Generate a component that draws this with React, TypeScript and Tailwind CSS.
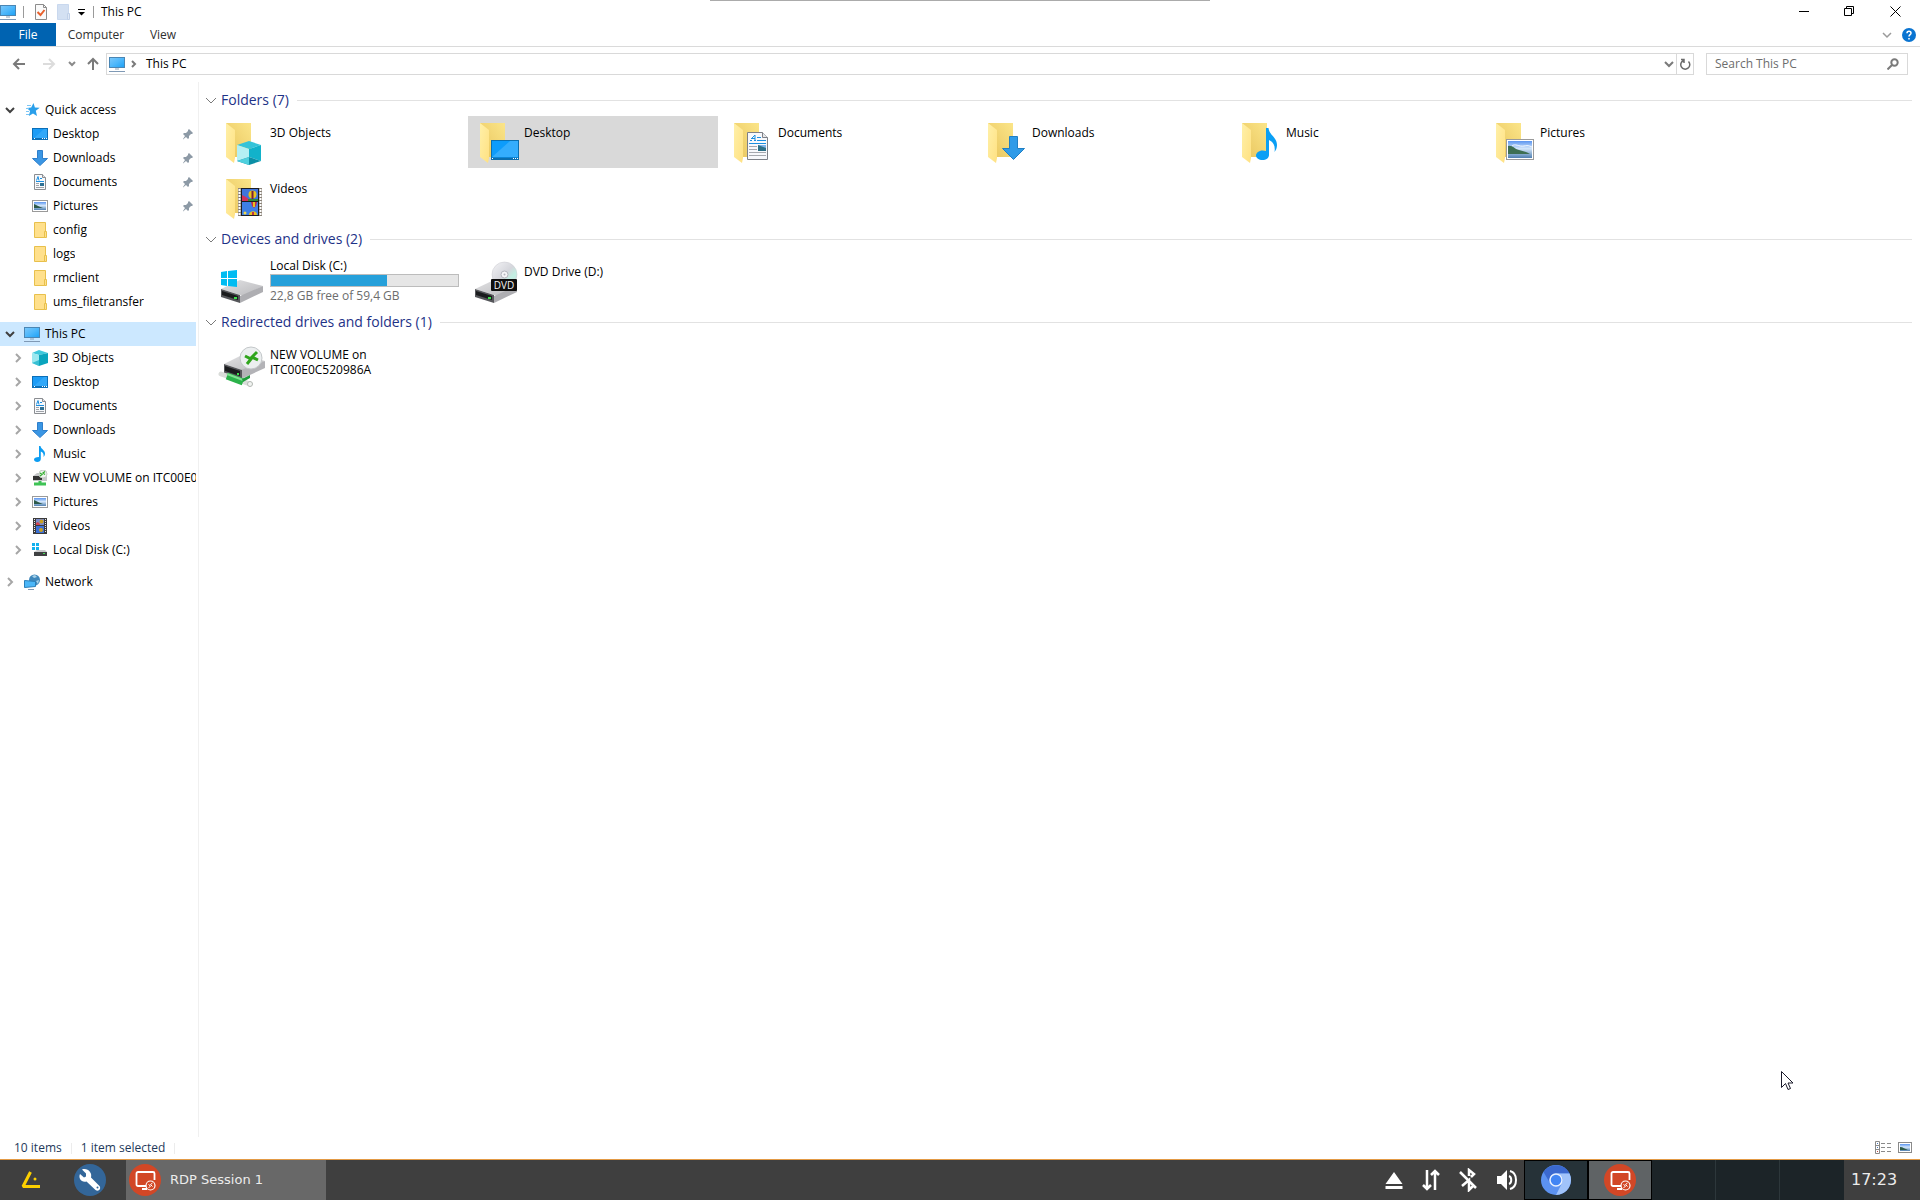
import React from 'react';
import { clsx } from 'clsx';

type IconName =
  | 'desktop'
  | 'downloads'
  | 'documents'
  | 'pictures'
  | 'folder'
  | 'objects'
  | 'music'
  | 'volume'
  | 'videos'
  | 'disk'
  | 'pc'
  | 'network'
  | 'star';

interface TreeItem {
  label: string;
  icon: IconName;
  pinned?: boolean;
}

interface FolderItem {
  label: string;
  icon: IconName;
  selected?: boolean;
}

const quickAccess: TreeItem[] = [
  { label: 'Desktop', icon: 'desktop', pinned: true },
  { label: 'Downloads', icon: 'downloads', pinned: true },
  { label: 'Documents', icon: 'documents', pinned: true },
  { label: 'Pictures', icon: 'pictures', pinned: true },
  { label: 'config', icon: 'folder' },
  { label: 'logs', icon: 'folder' },
  { label: 'rmclient', icon: 'folder' },
  { label: 'ums_filetransfer', icon: 'folder' },
];

const thisPc: TreeItem[] = [
  { label: '3D Objects', icon: 'objects' },
  { label: 'Desktop', icon: 'desktop' },
  { label: 'Documents', icon: 'documents' },
  { label: 'Downloads', icon: 'downloads' },
  { label: 'Music', icon: 'music' },
  { label: 'NEW VOLUME on ITC00E0C520986A', icon: 'volume' },
  { label: 'Pictures', icon: 'pictures' },
  { label: 'Videos', icon: 'videos' },
  { label: 'Local Disk (C:)', icon: 'disk' },
];

const folders: FolderItem[] = [
  { label: '3D Objects', icon: 'objects' },
  { label: 'Desktop', icon: 'desktop', selected: true },
  { label: 'Documents', icon: 'documents' },
  { label: 'Downloads', icon: 'downloads' },
  { label: 'Music', icon: 'music' },
  { label: 'Pictures', icon: 'pictures' },
  { label: 'Videos', icon: 'videos' },
];

/* Gradients shared by all icons */
const Gradients = () => (
  <svg className="absolute h-0 w-0" aria-hidden="true">
    <defs>
      <linearGradient id="screen" x1="0" y1="0" x2="1" y2="1">
        <stop offset="0" stopColor="#7cc8fb" />
        <stop offset="0.5" stopColor="#4fb8fb" />
        <stop offset="1" stopColor="#1ba0f5" />
      </linearGradient>
      <linearGradient id="back" x1="1" y1="0" x2="0" y2="1">
        <stop offset="0" stopColor="#fbe589" />
        <stop offset="1" stopColor="#e8c45c" />
      </linearGradient>
      <linearGradient id="flap" x1="0" y1="0" x2="1" y2="1">
        <stop offset="0" stopColor="#fff0a8" />
        <stop offset="1" stopColor="#ffe182" />
      </linearGradient>
      <linearGradient id="sky" x1="0" y1="0" x2="0" y2="1">
        <stop offset="0" stopColor="#5b95f0" />
        <stop offset="0.45" stopColor="#d3e6fa" />
        <stop offset="1" stopColor="#4f7fb0" />
      </linearGradient>
      <linearGradient id="metal" x1="0" y1="0" x2="1" y2="1">
        <stop offset="0" stopColor="#e2e2e4" />
        <stop offset="1" stopColor="#b9b9bc" />
      </linearGradient>
      <linearGradient id="disc" x1="0" y1="0" x2="1" y2="1">
        <stop offset="0" stopColor="#f4f4f6" />
        <stop offset="0.5" stopColor="#d5d6dc" />
        <stop offset="0.7" stopColor="#c2efe2" />
        <stop offset="1" stopColor="#d5d6dc" />
      </linearGradient>
    </defs>
  </svg>
);

const smallIcons: Record<IconName, React.ReactNode> = {
  desktop: (
    <>
      <rect x="0.5" y="2.5" width="15" height="11" fill="#1c9cf6" stroke="#0b6fb8" />
      <path d="M1 13L12 3h3v10z" fill="#3fb0fb" opacity="0.6" />
      <path d="M1 12.5h14" stroke="#0b6fb8" />
      <path d="M2 12.5h1M10 12.5h1M12 12.5h1M14 12.5h1" stroke="#fff" />
    </>
  ),
  downloads: <path d="M5.5 0.5h5v8h5L8 15.5 0.5 8.500h5z" fill="#3a96e4" stroke="#2f7fcb" />,
  documents: (
    <>
      <path d="M2.500 0.500h8l3 3v12h-11z" fill="#f8f9fb" stroke="#8a8d91" />
      <path d="M10.500 0.500v3h3" fill="#e3e5e8" stroke="#8a8d91" />
      <path d="M4.500 6.500L6 2.500l1 4M8 4.500h2M4 7.500h8" stroke="#1c8fe0" fill="none" />
      <path d="M4 9.500h3M4 11.500h3M4 13.500h8" stroke="#9ea2a8" />
      <rect x="8" y="9" width="4" height="3" fill="#2f7093" />
    </>
  ),
  pictures: (
    <>
      <rect x="0.500" y="2.500" width="15" height="11" fill="#fff" stroke="#9a9a9a" />
      <rect x="2" y="4" width="12" height="8" fill="url(#sky)" />
      <path d="M2 6c3 1 5 3 9 4H2z" fill="#2d5a4a" />
    </>
  ),
  folder: (
    <>
      <path d="M2.500 0.500h11v15h-11z" fill="#ffe08c" stroke="#e8c04c" />
      <path d="M12.500 9.500h2v6h-2z" fill="#ffe08c" stroke="#e8c04c" />
    </>
  ),
  objects: (
    <>
      <path d="M0 3L7 0l9 3-9 2z" fill="#3fc8dc" />
      <path d="M0 3l7 2v11l-7-3z" fill="#9be8f0" />
      <path d="M7 5l9-2v10l-9 3z" fill="#0aa4bd" />
      <path d="M0 13l7-3v6z" fill="#38bfd3" />
    </>
  ),
  music: <path d="M7 0h1.500c.3 3 4.500 4 4.500 7.500 0 1.500-.6 2.500-1.500 3.500.6-3-.5-4.500-2.700-5.400V13c0 1.800-1.600 3-3.500 3S2 15 2 13.500 3.800 11 7 11z" fill="#0c9df2" />,
  volume: (
    <>
      <path d="M1 6l4-3h8l2 3v5H1z" fill="#c6c7c9" />
      <rect x="1" y="6" width="9" height="4" fill="#333" />
      <circle cx="11" cy="4" r="4" fill="#eef2ee" stroke="#c4cbc4" />
      <path d="M8 3l2 1.500L8 6M13 1.500L11 3l2 1.500" stroke="#2fae2c" fill="none" strokeWidth="1.300" />
      <path d="M2 14h12M8 11v3" stroke="#3ec255" strokeWidth="3" />
    </>
  ),
  videos: (
    <>
      <rect x="1" y="0" width="14" height="16" fill="#3b3b3b" />
      <path d="M2.500 1v14M13.500 1v14" stroke="#e8e8e8" strokeDasharray="1 1" />
      <rect x="4" y="1" width="8" height="6" fill="#7d8cc8" />
      <rect x="4" y="8" width="8" height="7" fill="#3a6fd6" />
      <path d="M4 5l2-1 2 2v1H4z" fill="#d24452" />
      <circle cx="9.500" cy="3.500" r="2" fill="#c9a021" />
      <circle cx="9" cy="12" r="2" fill="#c9a021" />
    </>
  ),
  disk: (
    <>
      <path d="M0 1h3v3H0zM4 1h3v3H4zM0 5h3v3H0zM4 5h3v3H4z" fill="#12b1ee" />
      <path d="M2 10l3-2h8l2 2z" fill="#c9cacc" />
      <rect x="2" y="10" width="13" height="4" fill="#3f4042" />
      <rect x="11" y="11" width="2" height="1" fill="#48e05a" />
    </>
  ),
  pc: (
    <>
      <rect x="0.500" y="1.500" width="15" height="10" fill="url(#screen)" stroke="#4a86b4" />
      <path d="M6 13h4" stroke="#8a9fb4" />
      <path d="M0 15.500h16" stroke="#7f99b5" />
    </>
  ),
  network: (
    <>
      <circle cx="10.500" cy="6" r="5.500" fill="#3f88bc" />
      <path d="M8 2l3-1 2 2-3 1zM12 7l3-1-1 4z" fill="#a9d3ea" />
      <path d="M0.500 6.500l11 1v5l-11 1z" fill="#4ab6f8" stroke="#2a7fb8" />
      <path d="M4 15.500h6" stroke="#7f99b5" />
    </>
  ),
  star: (
    <>
      <path d="M9.500 1l1.400 4.500 4.800.2-3.900 3 1.200 5.300-4-2.600L4.800 14l1.300-4.900-3.300-3 4.400-.5z" fill="#2a9fea" />
      <path d="M3 3.500h4M2 6.500h3M2 9.500h3M2 12.500h3" stroke="#7cc6f5" />
    </>
  ),
};

const SmallIcon = ({ name }: { name: IconName }) => (
  <svg className="h-4 w-4 shrink-0" viewBox="0 0 16 16" aria-hidden="true">
    {smallIcons[name]}
  </svg>
);

/* Overlays are drawn in the same 48px box as the folder behind them */
const overlays: Partial<Record<IconName, React.ReactNode>> = {
  objects: (
    <>
      <path d="M19 27l12-4 12 4-12 4z" fill="#35c3d8" />
      <path d="M19 27l12 4v8l-12 4z" fill="#b4f0f4" />
      <path d="M43 27l-12 4v8l12 4z" fill="#12b2ca" />
      <path d="M19 43l12-4 12 4-12 4z" fill="#0b8fa6" />
      <path d="M19 43l12-4v8z" fill="#4fd0de" />
    </>
  ),
  desktop: (
    <>
      <rect x="19.500" y="22.500" width="27" height="19" fill="#0d9cfb" stroke="#0b6fb0" />
      <path d="M20 39L38 23h8v16z" fill="#34adfd" />
      <path d="M20 40.500h26" stroke="#0b6fb0" strokeWidth="2" />
      <path d="M20 40.500h1M41 40.500h1M43 40.500h1M45 40.500h1" stroke="#fff" />
    </>
  ),
  documents: (
    <>
      <path d="M21.500 14.500h15l5 5v22h-20z" fill="#f7f8fb" stroke="#7d8087" />
      <path d="M36.500 14.500v5h5" fill="#e6e7ea" stroke="#7d8087" />
      <path d="M24 22.500h2M28 22.500h2M25 21l4-4 0 5M26 20.500h3M31 19.500h4M31 22.500h9M23 25.500h17" stroke="#1c8fe0" fill="none" />
      <path d="M23 28.500h8M23 31.500h8M23 34.500h17M23 37.500h17" stroke="#a5a8ae" />
      <rect x="32" y="27" width="8" height="6" fill="#2d6f86" />
      <path d="M32 27h8v3z" fill="#7fb4e8" />
    </>
  ),
  downloads: <path d="M29.500 18.500h8v12h7L33.500 41.500 22.500 30.500h7z" fill="#2f9be8" stroke="#1f7fc4" />,
  music: <path d="M32 10h2.500c.5 7 8.500 9 8.500 17 0 3-1 5-2.500 7 1-6-1-10-5.500-12v15c0 3-3 5-6.500 5S22 40 22 37.500s3-5 6.500-5c1.500 0 2.500.2 3.500.5z" fill="#0a9ff5" />,
  pictures: (
    <>
      <rect x="18.500" y="21.500" width="27" height="20" fill="#fff" stroke="#9a9a9a" />
      <rect x="20" y="23" width="24" height="17" fill="url(#sky)" />
      <path d="M20 28c5-1 6 3 11 4 4 1 8 2 11 4H20z" fill="#3e6f52" />
      <path d="M24 28c3-3 7 1 12 0s5 0 8 1" stroke="#f2f8fd" fill="none" />
    </>
  ),
  videos: (
    <>
      <rect x="20" y="14" width="24" height="28" fill="#8b8378" />
      <path d="M21.500 15v26M42.500 15v26" stroke="#fff" strokeWidth="2" strokeDasharray="2 1" />
      <rect x="23" y="14" width="18" height="28" fill="#1d1d20" />
      <rect x="24" y="15" width="16" height="12" fill="#3f74dc" />
      <rect x="24" y="28" width="16" height="13" fill="#3e7fe6" />
      <path d="M24 21l4 2 4 3v1h-8z" fill="#d2325a" />
      <path d="M30 25h10v2H30z" fill="#2f8a3c" />
      <circle cx="34.500" cy="20.500" r="4" fill="#e8c21d" />
      <path d="M34.500 17v8" stroke="#7a1f3a" strokeWidth="2" />
      <path d="M33 28h6l-1 4-2 2-2-2z" fill="#c0304a" />
      <path d="M36 28v5" stroke="#e8c21d" strokeWidth="2" />
      <path d="M31 41c0-5 8-5 8 0z" fill="#e8c21d" />
      <path d="M35 38v3" stroke="#c0304a" strokeWidth="2" />
      <circle cx="27" cy="39" r="1.500" fill="#f2d94a" />
    </>
  ),
};

const FolderIcon = ({ name }: { name: IconName }) => (
  <svg className="h-12 w-12 shrink-0" viewBox="0 0 48 48" aria-hidden="true">
    <path d="M8 5h25v34H8z" fill="url(#back)" />
    <path d="M8 5l9 7v28l-1 5-8-6z" fill="url(#flap)" />
    {overlays[name]}
  </svg>
);

const DriveBody = () => (
  <>
    <path d="M3 32l19-9 23 6-19 10z" fill="url(#metal)" />
    <path d="M22 39l23-10v6L22 46v-7z" fill="#aeaeb2" />
    <path d="M3 32l19 6v8L3 40z" fill="#55565a" />
    <path d="M4 34l16 5v4L4 38z" fill="#1a1b1d" />
    <rect x="16" y="40" width="3" height="2" fill="#3de04c" />
  </>
);

const LocalDiskIcon = () => (
  <svg className="h-12 w-12 shrink-0" viewBox="0 0 48 48" aria-hidden="true">
    <DriveBody />
    <path d="M3 15l6-1v7H3zM10 14l9-1v8h-9zM3 22h6v7l-6-1zM10 22h9v8l-9-1z" fill="#00bcf2" />
  </svg>
);

const DvdIcon = () => (
  <svg className="h-12 w-12 shrink-0" viewBox="0 0 48 48" aria-hidden="true">
    <DriveBody />
    <circle cx="32.500" cy="17.500" r="12.500" fill="url(#disc)" stroke="#c8c9cf" strokeWidth="0.500" />
    <circle cx="32.500" cy="17.500" r="3.500" fill="#f6f6f8" stroke="#b4b6be" />
    <circle cx="32.500" cy="17.500" r="1" fill="#b4b6be" />
    <rect x="19" y="22" width="26" height="12" rx="1" fill="#0e0e0e" />
    <text x="32" y="32" textAnchor="middle" fontSize="10" fontFamily="Open Sans, sans-serif" fill="#f2f2f2">
      DVD
    </text>
  </svg>
);

const RedirectedIcon = () => (
  <svg className="h-12 w-12 shrink-0" viewBox="0 0 48 48" aria-hidden="true">
    <path d="M6 24l18-9 23 6-20 10z" fill="url(#metal)" />
    <path d="M23 30l24-9v7L23 39z" fill="#b3b3b7" />
    <path d="M6 24l18 6v9L6 33z" fill="#55565a" />
    <path d="M7 26l15 5v5L7 31z" fill="#1a1b1d" />
    <rect x="19" y="33" width="2" height="2" fill="#3de04c" />
    <path d="M3 34l29 10" stroke="#d9dcd9" strokeWidth="5" strokeLinecap="round" />
    <circle cx="32" cy="44" r="2.500" fill="#f2f4f2" stroke="#b4b8b4" />
    <path d="M9 36l16 6" stroke="#2bb24a" strokeWidth="7" />
    <path d="M9 34l16 6" stroke="#7ee08f" strokeWidth="2" />
    <path d="M24 39l8-4v3l-7 4z" fill="#1f9c3c" />
    <circle cx="33" cy="18" r="11" fill="#eceff0" stroke="#c3c7c9" />
    <path d="M27 16l6 3-4 5M39 12l-5 5 6 3" stroke="#2fa51c" strokeWidth="3" fill="none" />
  </svg>
);

const Chevron = ({ open, dark }: { open?: boolean; dark?: boolean }) => (
  <svg
    className={clsx('h-[10px] w-[10px] shrink-0', dark ? 'text-[#404040]' : 'text-[#a6a6a6]')}
    viewBox="0 0 10 10"
    fill="none"
    stroke="currentColor"
    strokeWidth="2"
    aria-hidden="true"
  >
    <path d={open ? 'M1 3l4 4 4-4' : 'M3 1l4 4-4 4'} />
  </svg>
);

const Pin = () => (
  <svg className="mr-[2px] ml-auto h-3 w-3 shrink-0" viewBox="0 0 12 12" aria-hidden="true">
    <path d="M7 1l4 4-1 1-1 0-2 2 0 2-1 1-2-2L1 11.500 1 11 3 8 1 6l1-1 2 0 2-2 0-1z" fill="#8d9aa6" />
  </svg>
);

const TreeRoot = ({ label, icon, open, active }: { label: string; icon: IconName; open?: boolean; active?: boolean }) => (
  <a
    href="#"
    className={clsx('flex h-6 w-[196px] items-center pl-[5px] whitespace-nowrap', active && 'bg-[#cce8ff]')}
  >
    <Chevron open={open} dark={open} />
    <span className="ml-[9px] flex">
      <SmallIcon name={icon} />
    </span>
    <span className="ml-[5px]">{label}</span>
  </a>
);

const TreeRow = ({ item, expandable }: { item: TreeItem; expandable?: boolean }) => (
  <a href="#" className="flex h-6 w-[196px] items-center pl-[13px] whitespace-nowrap">
    {expandable ? <Chevron /> : <span className="w-[10px] shrink-0" />}
    <span className="ml-[9px] flex">
      <SmallIcon name={item.icon} />
    </span>
    <span className="ml-[5px] overflow-hidden">{item.label}</span>
    {item.pinned && <Pin />}
  </a>
);

const Group = ({ title, children }: { title: string; children: React.ReactNode }) => (
  <section>
    <h2 className="flex h-[30px] items-center pl-[6px] text-[14px] text-[#1e3287]">
      <svg className="mr-1 h-3 w-3 shrink-0" viewBox="0 0 12 12" fill="none" stroke="#7a7a7a" aria-hidden="true">
        <path d="M1 4l5 5 5-5" />
      </svg>
      {title}
      <span className="ml-2 h-px flex-1 bg-[#e2e2e2]" />
    </h2>
    <div className="grid grid-cols-[repeat(auto-fill,250px)] gap-1 pt-px pl-[15px]">{children}</div>
  </section>
);

const Tile = ({ icon, selected, children }: { icon: React.ReactNode; selected?: boolean; children: React.ReactNode }) => (
  <button
    type="button"
    className={clsx('flex h-[52px] w-[250px] items-center gap-1 pl-1 text-left leading-[15px]', selected && 'bg-[#d9d9d9]')}
  >
    {icon}
    <span className="min-h-[34px] min-w-0 flex-1">{children}</span>
  </button>
);

const TitleBar = () => (
  <header className="flex h-[23px] items-center">
    <SmallIcon name="pc" />
    <span className="mx-[7px] h-3 w-px bg-[#9a9a9a]" />
    <button type="button" aria-label="Properties" className="ml-[3px]">
      <svg className="h-4 w-4" viewBox="0 0 16 16">
        <path d="M1.500 0.500h8l3 3v12h-11z" fill="#fafafa" stroke="#8c8c8c" />
        <path d="M9.500 0.500v3h3" fill="none" stroke="#8c8c8c" />
        <path d="M3.500 8l3 3 4-5" fill="none" stroke="#e8602c" strokeWidth="2" />
      </svg>
    </button>
    <button type="button" aria-label="New folder" className="ml-[7px]">
      <svg className="h-4 w-4" viewBox="0 0 16 16">
        <path d="M0.500 0.500h11v15h-11z" fill="#d3e0f2" stroke="#c9d8ee" />
        <path d="M10.500 9.500h2v6h-2z" fill="#dfe8f5" stroke="#c0d0e8" />
      </svg>
    </button>
    <button type="button" aria-label="Customize Quick Access Toolbar" className="ml-1">
      <svg className="h-2 w-[9px]" viewBox="0 0 9 8">
        <path d="M1 1.500h7" stroke="#000" />
        <path d="M1 4h7L4.500 7.500z" fill="#000" />
      </svg>
    </button>
    <span className="mx-[7px] h-3 w-px bg-[#9a9a9a]" />
    <h1>This PC</h1>
    <div className="mr-[2px] ml-auto flex">
      <button type="button" aria-label="Minimize" className="flex h-5 w-[46px] items-center justify-center">
        <svg className="h-[11px] w-[11px]" viewBox="0 0 11 11" stroke="#000">
          <path d="M1 5.500h10" />
        </svg>
      </button>
      <button type="button" aria-label="Restore" className="flex h-5 w-[46px] items-center justify-center">
        <svg className="h-[11px] w-[11px]" viewBox="0 0 11 11" fill="none" stroke="#000">
          <path d="M0.500 2.500h7v7h-7zM2.500 2.500v-2h7v7h-2" />
        </svg>
      </button>
      <button type="button" aria-label="Close" className="flex h-5 w-[46px] items-center justify-center">
        <svg className="h-[11px] w-[11px]" viewBox="0 0 11 11" stroke="#000">
          <path d="M0.500 0.500l10 10M10.500 0.500l-10 10" />
        </svg>
      </button>
    </div>
  </header>
);

const Ribbon = () => (
  <nav className="flex h-6 items-stretch border-b border-[#dadada] text-[#303030]">
    <button type="button" className="w-14 bg-[#0063b1] text-white">
      File
    </button>
    <button type="button" className="w-20">
      Computer
    </button>
    <button type="button" className="w-[54px]">
      View
    </button>
    <div className="mr-1 ml-auto flex items-center gap-[10px]">
      <button type="button" aria-label="Expand the Ribbon">
        <svg className="h-2 w-[10px]" viewBox="0 0 10 8" fill="none" stroke="#9a9a9a" strokeWidth="1.500">
          <path d="M1 2l4 4 4-4" />
        </svg>
      </button>
      <button type="button" aria-label="Help">
        <svg className="h-[14px] w-[14px]" viewBox="0 0 14 14">
          <circle cx="7" cy="7" r="7" fill="#0a74d1" />
          <path d="M5 5.200c0-2.600 4-2.600 4 0C9 6.700 7 6.700 7 8.500M7 10v1.500" fill="none" stroke="#fff" strokeWidth="1.500" />
        </svg>
      </button>
    </div>
  </nav>
);

const AddressRow = () => (
  <div className="mb-px flex h-[34px] items-center pr-3">
    <div className="flex w-[106px] shrink-0 items-center pl-3">
      <button type="button" aria-label="Back">
        <svg className="h-[14px] w-[14px]" viewBox="0 0 14 14" fill="none" stroke="#7a7a7a" strokeWidth="2">
          <path d="M13 7H2M7 2L2 7l5 5" />
        </svg>
      </button>
      <button type="button" aria-label="Forward" className="ml-4">
        <svg className="h-[14px] w-[14px]" viewBox="0 0 14 14" fill="none" stroke="#dcdcdc" strokeWidth="2">
          <path d="M1 7h11M7 2l5 5-5 5" />
        </svg>
      </button>
      <button type="button" aria-label="Recent locations" className="ml-3">
        <svg className="h-2 w-2" viewBox="0 0 8 8" fill="none" stroke="#8a8a8a" strokeWidth="2">
          <path d="M1 2l3 3 3-3" />
        </svg>
      </button>
      <button type="button" aria-label="Up" className="ml-[10px]">
        <svg className="h-[14px] w-[14px]" viewBox="0 0 14 14" fill="none" stroke="#7a7a7a" strokeWidth="2">
          <path d="M7 13V2M2 7l5-5 5 5" />
        </svg>
      </button>
    </div>
    <div className="flex h-[22px] flex-1 items-center border border-[#d9d9d9] pl-[2px]">
      <SmallIcon name="pc" />
      <svg className="mx-[5px] h-2 w-2" viewBox="0 0 8 8" fill="none" stroke="#7a7a7a" strokeWidth="2">
        <path d="M2 1l3 3-3 3" />
      </svg>
      <a href="#" className="ml-[3px]">
        This PC
      </a>
      <button type="button" aria-label="Previous locations" className="ml-auto pr-[2px]">
        <svg className="h-[10px] w-[10px]" viewBox="0 0 10 10" fill="none" stroke="#7a7a7a" strokeWidth="2">
          <path d="M1 3l4 4 4-4" />
        </svg>
      </button>
      <button type="button" aria-label="Refresh" className="flex h-full w-[17px] items-center justify-center border-l border-[#d9d9d9]">
        <svg className="h-3 w-3" viewBox="0 0 12 12" fill="none" stroke="#6b6b6b" strokeWidth="1.500">
          <path d="M9.500 3.500a4.500 4.500 0 1 1-5-1M2 1.500h3v3.500" />
        </svg>
      </button>
    </div>
    <label className="ml-3 flex h-[22px] w-[202px] items-center border border-[#d9d9d9] px-2">
      <input
        type="text"
        aria-label="Search This PC"
        placeholder="Search This PC"
        className="min-w-0 flex-1 outline-none placeholder:text-[#6d6d6d]"
      />
      <svg className="h-3 w-3" viewBox="0 0 12 12" fill="none" stroke="#7a7a7a" strokeWidth="2">
        <circle cx="7.500" cy="4.500" r="3.200" />
        <path d="M5 7l-4.500 4.500" />
      </svg>
    </label>
  </div>
);

const Sidebar = () => (
  <aside className="w-[199px] shrink-0 border-r border-[#f0f0f0] pt-4">
    <TreeRoot label="Quick access" icon="star" open />
    {quickAccess.map((item) => (
      <TreeRow key={item.label} item={item} />
    ))}
    <div className="mt-2">
      <TreeRoot label="This PC" icon="pc" open active />
      {thisPc.map((item) => (
        <TreeRow key={item.label} item={item} expandable />
      ))}
    </div>
    <div className="mt-2">
      <TreeRoot label="Network" icon="network" />
    </div>
  </aside>
);

const StatusBar = () => (
  <footer className="flex h-[22px] items-center pr-2 pl-[14px] text-[#1e395b]">
    <span>10 items</span>
    <span className="mx-[9px] h-[11px] w-px bg-[#ececec]" />
    <span>1 item selected</span>
    <span className="mx-[9px] h-[11px] w-px bg-[#ececec]" />
    <button type="button" aria-label="Details view" className="ml-auto">
      <svg className="h-[14px] w-4" viewBox="0 0 16 14" fill="none" stroke="#8a8a8a">
        <path d="M0.500 0.500h4v12h-4zM0.500 4.500h4M0.500 8.500h4" />
        <path d="M6 2.500h4M12 2.500h4M6 6.500h4M12 6.500h4M6 10.500h4M12 10.500h4" />
        <path d="M2 2.500h1M2 6.500h1" stroke="#4a7ac0" />
        <path d="M2 10.500h1" stroke="#c04a4a" />
      </svg>
    </button>
    <button type="button" aria-label="Large icons view" className="ml-[7px]">
      <svg className="h-3 w-[14px]" viewBox="0 0 14 12">
        <rect x="0.500" y="0.500" width="13" height="10" fill="#fff" stroke="#8a8a8a" />
        <rect x="2" y="2" width="10" height="7" fill="url(#sky)" />
        <path d="M2 5c3 0 5 2 8 3H2z" fill="#2d5a4a" />
      </svg>
    </button>
  </footer>
);

const RdpIcon = () => (
  <svg className="h-8 w-8" viewBox="0 0 32 32" fill="none" stroke="#fff" aria-hidden="true">
    <circle cx="16" cy="16" r="16" fill="#d24726" stroke="none" />
    <path d="M18 22H9a1.500 1.500 0 0 1-1.500-1.500v-11A1.500 1.500 0 0 1 9 8h15a1.500 1.500 0 0 1 1.500 1.500V16" strokeWidth="1.800" />
    <path d="M13 25h5" strokeWidth="2" />
    <circle cx="21.500" cy="21.500" r="4.500" fill="#d24726" strokeWidth="1.200" />
    <path d="M19.500 20.500l2 1.500-2 2M23.500 19l-2 1.500 2 2" strokeWidth="1" />
  </svg>
);

const Taskbar = () => (
  <div className="flex h-[41px] items-stretch border-t border-[#e39a45] bg-[#3f3f3f] font-['DejaVu_Sans',sans-serif] text-[#ececec]">
    <button type="button" aria-label="Start menu" className="flex w-[60px] items-center justify-center">
      <svg className="h-[18px] w-5" viewBox="0 0 20 18" fill="none" stroke="#fdd000" strokeWidth="3">
        <path d="M10.500 1L3 15.500h17" strokeLinejoin="bevel" />
        <circle cx="15" cy="8" r="1.500" fill="#fdd000" stroke="none" />
      </svg>
    </button>
    <button type="button" aria-label="Setup" className="flex w-[66px] items-center pl-[14px]">
      <svg className="h-8 w-8" viewBox="0 0 32 32">
        <circle cx="16" cy="16" r="16" fill="#336699" />
        <path d="M8 5.500l4 4v3l-2 1-4-3.500c-2 4 1.500 9 6.500 7.500l9 8.500c3 2 6-1 4-4l-8.500-8.500c1.500-5-3.500-10-9-8z" fill="#fff" />
        <circle cx="23.500" cy="23.500" r="1" fill="#336699" />
      </svg>
    </button>
    <button type="button" className="flex w-[200px] items-center gap-[9px] bg-[#686868] pl-[3px] text-[13px]">
      <RdpIcon />
      RDP Session 1
    </button>
    <div className="mr-[6px] ml-auto flex items-center gap-[18px]">
      <button type="button" aria-label="Eject">
        <svg className="h-5 w-5" viewBox="0 0 20 20" fill="#fff">
          <path d="M10 2l8.500 12h-17zM1.500 16h17v3h-17z" />
        </svg>
      </button>
      <button type="button" aria-label="Network">
        <svg className="h-[22px] w-[18px]" viewBox="0 0 18 22" fill="none" stroke="#fff" strokeWidth="2.500">
          <path d="M5 1v19M1 16l4 4 4-4M13 21V2M9 6l4-4 4 4" />
        </svg>
      </button>
      <button type="button" aria-label="Bluetooth">
        <svg className="h-6 w-5" viewBox="0 0 20 24" fill="none" stroke="#fff" strokeWidth="2.500">
          <path d="M2 4l16 16M11 8V2l5 4-3 3M4 18l7-6v10l4-4" />
        </svg>
      </button>
      <button type="button" aria-label="Volume">
        <svg className="h-[22px] w-[22px]" viewBox="0 0 22 22" fill="none" stroke="#fff" strokeWidth="2">
          <path d="M1 7h4l6-6v20l-6-6H1z" fill="#fff" stroke="none" />
          <path d="M13 7c3 1 3 7 0 8M14 2c8 2 8 16 0 18" />
        </svg>
      </button>
    </div>
    <button type="button" aria-label="Chromium" className="flex w-16 items-center justify-center border border-black bg-[#263238]">
      <svg className="h-[30px] w-[30px]" viewBox="0 0 30 30">
        <circle cx="15" cy="15" r="15" fill="#5c92f0" />
        <path d="M2.500 7A15 15 0 0 1 28.500 8.500H15A6.500 6.500 0 0 0 9 18z" fill="#3b69cf" />
        <path d="M28.500 8.500A15 15 0 0 1 15 30l6-12a6.500 6.500 0 0 0-6-9.500z" fill="#a0c3fa" />
        <circle cx="15" cy="15" r="6" fill="#4285f4" stroke="#e8f0fe" strokeWidth="1.500" />
      </svg>
    </button>
    <button type="button" aria-label="RDP Session 1 window" className="flex w-16 items-center justify-center border border-black bg-[#5f6365]">
      <RdpIcon />
    </button>
    <div className="flex divide-x divide-[#2d373b] bg-[#1c2428]">
      <span className="w-16" />
      <span className="w-16" />
      <span className="w-16" />
    </div>
    <time className="flex w-[76px] items-center pl-[7px] text-[16px]">17:23</time>
  </div>
);

const App: React.FC = () => (
  <div className="relative flex min-h-screen flex-col bg-white font-['Open_Sans','Noto_Sans',sans-serif] text-[12px] leading-4 text-black">
    <Gradients />
    {/* Edge of the hidden session toolbar */}
    <div className="absolute top-0 left-1/2 h-px w-[500px] -translate-x-1/2 bg-[#ababab]" />
    <TitleBar />
    <Ribbon />
    <AddressRow />

    <div className="flex flex-1">
      <Sidebar />
      <main className="flex-1 pt-[3px] pr-2">
        <Group title="Folders (7)">
          {folders.map((f) => (
            <Tile key={f.label} icon={<FolderIcon name={f.icon} />} selected={f.selected}>
              {f.label}
            </Tile>
          ))}
        </Group>

        <Group title="Devices and drives (2)">
          <Tile icon={<LocalDiskIcon />}>
            <span className="block">Local Disk (C:)</span>
            <span className="my-px block h-[13px] w-[189px] border border-[#bcbcbc] bg-[#e6e6e6]">
              <span className="block h-full w-[62%] bg-[#26a0da]" />
            </span>
            <span className="block pb-px text-[#6d6d6d]">22,8 GB free of 59,4 GB</span>
          </Tile>
          <Tile icon={<DvdIcon />}>DVD Drive (D:)</Tile>
        </Group>

        <Group title="Redirected drives and folders (1)">
          <Tile icon={<RedirectedIcon />}>
            NEW VOLUME on
            <br />
            ITC00E0C520986A
          </Tile>
        </Group>
      </main>
    </div>

    <StatusBar />
    <Taskbar />

    {/* Mouse pointer */}
    <svg className="absolute right-[126px] bottom-[109px] h-5 w-[13px]" viewBox="0 0 13 20" fill="#fff" stroke="#1a1a2a" aria-hidden="true">
      <path d="M0.500 0.500v16l4-4 2.500 6 2.500-1-2.500-5.500h5z" />
    </svg>
  </div>
);

export default App;
